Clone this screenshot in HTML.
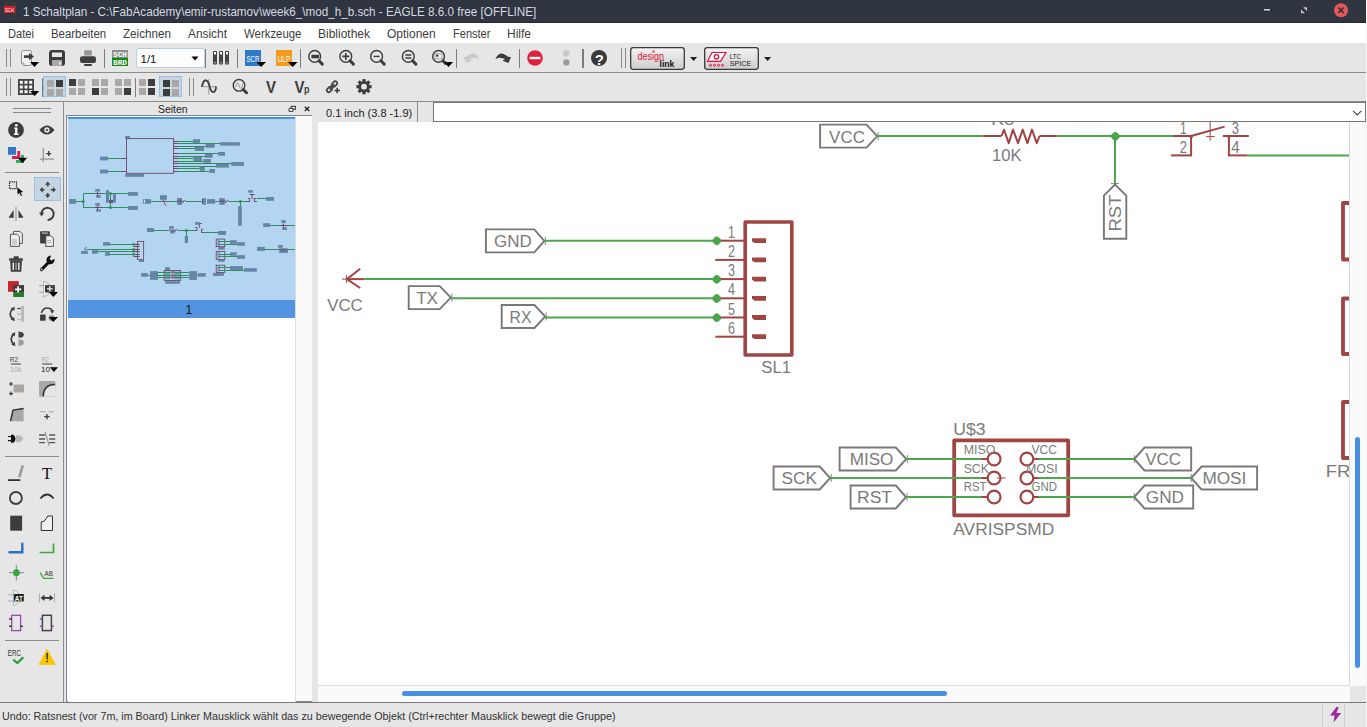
<!DOCTYPE html>
<html><head><meta charset="utf-8">
<style>
*{margin:0;padding:0;box-sizing:border-box}
html,body{width:1367px;height:727px;overflow:hidden;background:#e6e6e6;font-family:"Liberation Sans",sans-serif}
.a{position:absolute}
.hl{position:absolute;height:1px;background:#8c8c8c}
.vl{position:absolute;width:1px;background:#8c8c8c}
.tt{position:absolute;white-space:nowrap;transform-origin:0 0;line-height:1}
</style></head>
<body>
<div class="a" style="left:0;top:0;width:1367px;height:23px;background:#2e3440"></div>
<div class="tt" style="left:23px;top:5px;font-size:13px;color:#d6dae0;transform:scaleX(0.897)">1 Schaltplan - C:\FabAcademy\emir-rustamov\week6_\mod_h_b.sch - EAGLE 8.6.0 free [OFFLINE]</div>
<div class="a" style="left:0;top:23px;width:1367px;height:20px;background:#fff"></div>
<div class="tt" style="left:8px;top:28px;font-size:12px;color:#3c3c3c;transform:scaleX(0.93)">Datei</div>
<div class="tt" style="left:51px;top:28px;font-size:12px;color:#3c3c3c;transform:scaleX(0.95)">Bearbeiten</div>
<div class="tt" style="left:123px;top:28px;font-size:12px;color:#3c3c3c;transform:scaleX(0.97)">Zeichnen</div>
<div class="tt" style="left:188px;top:28px;font-size:12px;color:#3c3c3c;transform:scaleX(0.99)">Ansicht</div>
<div class="tt" style="left:244px;top:28px;font-size:12px;color:#3c3c3c;transform:scaleX(0.95)">Werkzeuge</div>
<div class="tt" style="left:318px;top:28px;font-size:12px;color:#3c3c3c;transform:scaleX(1)">Bibliothek</div>
<div class="tt" style="left:387px;top:28px;font-size:12px;color:#3c3c3c;transform:scaleX(1)">Optionen</div>
<div class="tt" style="left:453px;top:28px;font-size:12px;color:#3c3c3c;transform:scaleX(0.92)">Fenster</div>
<div class="tt" style="left:507px;top:28px;font-size:12px;color:#3c3c3c;transform:scaleX(1)">Hilfe</div>
<div class="hl" style="left:0;top:72px;width:1367px"></div>
<div class="hl" style="left:0;top:101px;width:1367px"></div>
<div class="vl" style="left:63px;top:102px;height:600px"></div>
<div class="tt" style="left:158px;top:104px;font-size:11px;color:#222;transform:scaleX(0.95)">Seiten</div>
<div class="a" style="left:66px;top:115px;width:246px;height:587px;background:#fafafa;border:1px solid #818896;border-right:none"></div>
<div class="a" style="left:68px;top:318px;width:227px;height:384px;background:#fff"></div>
<div class="a" style="left:68px;top:117px;width:227px;height:2px;background:#4a8fe0"></div>
<div class="a" style="left:68px;top:119px;width:227px;height:181px;background:#b3d5f2"></div>
<div class="a" style="left:68px;top:300px;width:227px;height:18px;background:#5294e2"></div>
<div class="tt" style="left:185.5px;top:304px;font-size:12px;color:#111">1</div>
<div class="a" style="left:295px;top:117px;width:1px;height:585px;background:#d9dee4"></div>
<div class="tt" style="left:326px;top:108px;font-size:11px;color:#222">0.1 inch (3.8 -1.9)</div>
<div class="vl" style="left:417px;top:102px;height:20px"></div>
<div class="a" style="left:433px;top:102px;width:933px;height:20px;background:#fff;border:1px solid #777"></div>
<div class="a" style="left:318px;top:122px;width:1032px;height:564px;background:#fff;border-right:1px solid #d7dce2;border-bottom:1px solid #d7dce2"></div>
<div class="a" style="left:1350px;top:122px;width:17px;height:564px;background:#fafafa"></div>
<div class="a" style="left:318px;top:686px;width:1032px;height:16px;background:#fafafa"></div>
<div class="a" style="left:402px;top:691px;width:545px;height:5px;background:#4a90e2;border-radius:3px"></div>
<div class="a" style="left:1355px;top:437px;width:5px;height:231px;background:#4a90e2;border-radius:3px"></div>
<div class="hl" style="left:0;top:702px;width:1367px;background:#7a7a7a"></div>
<div class="tt" style="left:2px;top:711px;font-size:11.3px;color:#333;transform:scaleX(0.95)">Undo: Ratsnest (vor 7m, im Board) Linker Mausklick wählt das zu bewegende Objekt (Ctrl+rechter Mausklick bewegt die Gruppe)</div>
<div class="vl" style="left:1322px;top:704px;height:23px;background:#cfcfcf"></div>
<div class="vl" style="left:1344px;top:704px;height:23px;background:#cfcfcf"></div>
<div class="a" style="left:0;top:22px;width:1366px;height:1px;background:#252a35"></div>
<div class="a" style="left:1366px;top:0;width:1px;height:727px;background:#f7f7f7"></div>
<svg class="a" style="left:0;top:0" width="1367" height="727" viewBox="0 0 1367 727"><g id="tb1">
<!-- grip -->
<rect x="6" y="49" width="1" height="18" fill="#8a8a8a"/><rect x="10" y="49" width="1" height="18" fill="#8a8a8a"/>
<!-- open -->
<path d="M21.5 52.5 Q21.5 50.5 23.5 50.5 L29.5 50.5 Q31.5 50.5 31.5 52.5 L31.5 63.5 Q31.5 65.5 29.5 65.5 L24 65.5 L21.5 63 Z" fill="#f2f2f2" stroke="#8d8d8d" stroke-width="1"/>
<path d="M21.5 63 L24 63 L24 65.5" fill="#ccc" stroke="#8d8d8d" stroke-width="0.8"/>
<rect x="24" y="55.3" width="5.5" height="2.6" fill="#3d3d3d"/>
<path d="M29 53 L34 56.6 L29 60.2 Z" fill="#3d3d3d"/>
<path d="M30 62 L39 62 L34.5 67 Z" fill="#000"/>
<!-- save -->
<rect x="49" y="50" width="16" height="16" rx="3" fill="#3d3d3d"/>
<rect x="52" y="52.5" width="10" height="4.5" fill="#e8e8e8"/>
<rect x="52" y="60" width="10" height="6" fill="#aca8a6"/>
<rect x="59" y="61.8" width="1.8" height="2.8" fill="#eee"/>
<!-- print -->
<rect x="84" y="50" width="8" height="5.7" rx="0.8" fill="#a9a5a2"/>
<rect x="85" y="51.6" width="6" height="0.9" fill="#858280"/><rect x="85" y="53.4" width="6" height="0.9" fill="#858280"/>
<rect x="80" y="56.3" width="16" height="6.7" rx="2.2" fill="#3d3d3d"/>
<rect x="84" y="64" width="8" height="2" rx="1" fill="#3d3d3d"/>
<rect x="104" y="49" width="1" height="19" fill="#7c7c7c"/>
<!-- sch brd -->
<rect x="112" y="50" width="16" height="7.5" fill="#8e8e8e"/>
<rect x="112" y="57.5" width="16" height="8.5" fill="#178517"/>
<text x="120" y="56.8" font-family="Liberation Mono" font-size="7.5" font-weight="bold" fill="#fff" text-anchor="middle" textLength="14" lengthAdjust="spacingAndGlyphs">SCH</text>
<text x="120" y="65" font-family="Liberation Mono" font-size="8" font-weight="bold" fill="#fff" text-anchor="middle" textLength="14" lengthAdjust="spacingAndGlyphs">BRD</text>
<!-- combo -->
<rect x="136.5" y="48.5" width="68" height="19" rx="2" fill="#fdfdfd" stroke="#b9cde3" stroke-width="1"/>
<text x="140.5" y="63" font-family="Liberation Sans" font-size="11.5" fill="#111">1/1</text>
<path d="M191.5 56.5 L198.5 56.5 L195 60.5 Z" fill="#000"/>
<rect x="205" y="49" width="1" height="19" fill="#7c7c7c"/>
<!-- library -->
<g fill="#434343"><rect x="213" y="51" width="4" height="13.5" rx="0.8"/><rect x="219" y="51" width="4" height="13.5" rx="0.8"/><rect x="225" y="51" width="4" height="13.5" rx="0.8"/></g>
<g fill="#fff"><rect x="214" y="52" width="2" height="2.5"/><rect x="220" y="52" width="2" height="2.5"/><rect x="226" y="52" width="2" height="2.5"/></g>
<g fill="#999"><rect x="214" y="62" width="2" height="1.5"/><rect x="220" y="62" width="2" height="1.5"/><rect x="226" y="62" width="2" height="1.5"/></g>
<rect x="237" y="49" width="1" height="19" fill="#7c7c7c"/>
<!-- SCR -->
<rect x="245" y="50" width="16" height="16" fill="#2f79c9"/>
<text x="253" y="62" font-family="Liberation Sans" font-size="8.5" fill="#fff" text-anchor="middle" textLength="13" lengthAdjust="spacingAndGlyphs">SCR</text>
<path d="M256.5 62 L266 62 L261.2 67 Z" fill="#000"/>
<!-- ULP -->
<rect x="276" y="50" width="16" height="16" fill="#f29b1d"/>
<text x="284" y="62" font-family="Liberation Sans" font-size="8.5" fill="#fff" text-anchor="middle" textLength="13" lengthAdjust="spacingAndGlyphs">ULP</text>
<path d="M288 62 L297.5 62 L292.7 67 Z" fill="#000"/>
<rect x="300" y="49" width="1" height="19" fill="#7c7c7c"/>
<!-- zoom icons -->
<g stroke="#3d3d3d" fill="none">
<circle cx="314.7" cy="56.4" r="5.9" stroke-width="1.4"/><path d="M319 60.8 L322.3 64.1" stroke-width="3" stroke-linecap="round"/>
<circle cx="345.8" cy="56.4" r="5.9" stroke-width="1.4"/><path d="M350.1 60.8 L353.4 64.1" stroke-width="3" stroke-linecap="round"/>
<circle cx="376.6" cy="56.4" r="5.9" stroke-width="1.4"/><path d="M380.9 60.8 L384.2 64.1" stroke-width="3" stroke-linecap="round"/>
<circle cx="408.3" cy="56.4" r="5.9" stroke-width="1.4"/><path d="M412.6 60.8 L415.9 64.1" stroke-width="3" stroke-linecap="round"/>
<circle cx="438.6" cy="56.4" r="5.9" stroke-width="1.4"/><path d="M442.9 60.8 L445.5 63.4" stroke-width="3" stroke-linecap="round"/>
</g>
<rect x="311.4" y="54.8" width="7.7" height="3.5" fill="#3d3d3d"/>
<path d="M342.3 56.4 H349.3 M345.8 52.9 V59.9" stroke="#3d3d3d" stroke-width="1.6"/>
<path d="M373.6 56.4 H379.6" stroke="#3d3d3d" stroke-width="1.4"/>
<path d="M405.3 55 H411.3 M405.3 58 H411.3" stroke="#3d3d3d" stroke-width="1.3"/>
<rect x="435" y="53.8" width="7" height="5" fill="#eee" stroke="#999" stroke-width="0.8"/>
<rect x="436" y="54.6" width="2.4" height="2" fill="#3d3d3d"/>
<path d="M444 62 L453 62 L448.5 67 Z" fill="#000"/>
<rect x="456" y="49" width="1" height="19" fill="#7c7c7c"/>
<!-- undo / redo -->
<path d="M479.2 59.2 Q475.5 50.6 468.5 55.2 L467.0 56.6 L463.5 57.3 L466.1 62.9 L472.0 60.8 L469.5 59.3 Q474.0 56.2 479.2 59.2 Z" fill="#c9c9c9"/>
<path d="M495.3 59.2 Q499 50.6 506 55.2 L507.5 56.6 L511 57.3 L508.4 62.9 L502.5 60.8 L505 59.3 Q500.5 56.2 495.3 59.2 Z" fill="#3d3d3d"/>
<rect x="519" y="49" width="1" height="19" fill="#7c7c7c"/>
<!-- stop -->
<circle cx="535" cy="58" r="7.8" fill="#e0213c"/>
<rect x="529.6" y="56.8" width="10.8" height="2.4" fill="#fff"/>
<circle cx="566.3" cy="53.3" r="3.2" fill="#c9c9c9"/>
<circle cx="566.3" cy="62.4" r="3.2" fill="#9b9b9b"/>
<rect x="582" y="49" width="2" height="19" fill="#7c7c7c"/>
<!-- help -->
<circle cx="599" cy="58" r="8" fill="#3a3a3a"/>
<text x="599.3" y="64.6" font-family="Liberation Sans" font-weight="bold" font-size="15" fill="#fff" text-anchor="middle">?</text>
<rect x="621" y="48" width="1" height="20" fill="#8a8a8a"/><rect x="625" y="48" width="1" height="20" fill="#8a8a8a"/>
<!-- designlink -->
<defs><linearGradient id="btng" x1="0" y1="0" x2="0" y2="1"><stop offset="0" stop-color="#f3f3f3"/><stop offset="1" stop-color="#cdcdcd"/></linearGradient></defs>
<rect x="630.7" y="47.7" width="53.6" height="21.6" rx="2.5" fill="url(#btng)" stroke="#3a3a3a" stroke-width="1.3"/>
<text x="637.5" y="59.6" font-family="Liberation Sans" font-size="10.5" fill="#e0103a" textLength="26.4" lengthAdjust="spacingAndGlyphs">design</text><circle cx="653.6" cy="51.4" r="0.9" fill="none" stroke="#e0103a" stroke-width="0.7"/>
<text x="659.6" y="66.7" font-family="Liberation Sans" font-weight="bold" font-size="9.5" fill="#111" textLength="14.6" lengthAdjust="spacingAndGlyphs">link</text>
<path d="M690 57 L697.2 57 L693.6 61 Z" fill="#222"/>
<!-- ltspice -->
<rect x="704.7" y="47.7" width="53.6" height="21.6" rx="2.5" fill="url(#btng)" stroke="#3a3a3a" stroke-width="1.3"/>
<path d="M712 52.5 L726 52.5 L720.5 61.3 L707.5 61.3 Z" fill="#fff" stroke="#e0103a" stroke-width="1.2"/>
<circle cx="716.5" cy="56.8" r="2.2" fill="none" stroke="#e0103a" stroke-width="1.3"/>
<g fill="none" stroke="#e0103a" stroke-width="1"><circle cx="710.5" cy="65.3" r="1"/><circle cx="714.5" cy="65.3" r="1"/><circle cx="718.5" cy="65.3" r="1"/><circle cx="722.5" cy="65.3" r="1"/></g>
<text x="729.8" y="59" font-family="Liberation Sans" font-size="7" fill="#222" textLength="11" lengthAdjust="spacingAndGlyphs">LTC</text>
<text x="729.8" y="66" font-family="Liberation Sans" font-size="7" fill="#222" textLength="21.5" lengthAdjust="spacingAndGlyphs">SPICE</text>
<path d="M764 57 L771.2 57 L767.6 61 Z" fill="#222"/>
</g>
<g id="tb2">
<rect x="6" y="78" width="1" height="18" fill="#8a8a8a"/><rect x="10" y="78" width="1" height="18" fill="#8a8a8a"/>
<!-- grid -->
<rect x="18" y="79" width="16" height="16" fill="#444"/>
<g fill="#fff"><rect x="19.8" y="80.8" width="3" height="3"/><rect x="24.5" y="80.8" width="3" height="3"/><rect x="29.2" y="80.8" width="3" height="3"/>
<rect x="19.8" y="85.5" width="3" height="3"/><rect x="24.5" y="85.5" width="3" height="3"/><rect x="29.2" y="85.5" width="3" height="3"/>
<rect x="19.8" y="90.2" width="3" height="3"/><rect x="24.5" y="90.2" width="3" height="3"/><rect x="29.2" y="90.2" width="3" height="3"/></g>
<path d="M30 91 L39.2 91 L34.6 96 Z" fill="#000"/>
<rect x="42" y="78" width="1" height="19" fill="#7c7c7c"/>
<!-- layout buttons -->
<rect x="43.5" y="76.5" width="22" height="20" fill="#c6d5e4" stroke="#96bde2" stroke-width="1"/>
<g fill="#aba7a5">
<rect x="47" y="80" width="7" height="7"/><rect x="47" y="89" width="7" height="7"/><rect x="56" y="89" width="7" height="7"/>
<rect x="78" y="79" width="7" height="7"/><rect x="69" y="88" width="7" height="7"/><rect x="78" y="88" width="7" height="7"/>
<rect x="92" y="79" width="7" height="7"/><rect x="101" y="79" width="7" height="7"/><rect x="101" y="88" width="7" height="7"/>
<rect x="115" y="79" width="7" height="7"/><rect x="124" y="79" width="7" height="7"/><rect x="115" y="88" width="7" height="7"/>
<rect x="139" y="79" width="7" height="7"/><rect x="139" y="88" width="7" height="7"/>
</g>
<g fill="#3c3c3c">
<rect x="56" y="80" width="7" height="7"/>
<rect x="69" y="79" width="7" height="7"/>
<rect x="92" y="88" width="7" height="7"/>
<rect x="124" y="88" width="7" height="7"/>
<rect x="148" y="79" width="7" height="7"/><rect x="148" y="88" width="7" height="7"/>
</g>
<rect x="135" y="78" width="1" height="19" fill="#7c7c7c"/>
<rect x="159.5" y="76.5" width="22" height="20" fill="#c6d5e4" stroke="#96bde2" stroke-width="1"/>
<rect x="163" y="80" width="7" height="7" fill="#3c3c3c"/><rect x="163" y="89" width="7" height="7" fill="#3c3c3c"/>
<rect x="172" y="80" width="7" height="7" fill="#aba7a5"/><rect x="172" y="89" width="7" height="7" fill="#aba7a5"/>
<rect x="189" y="78" width="1" height="18" fill="#8a8a8a"/><rect x="193" y="78" width="1" height="18" fill="#8a8a8a"/>
<!-- sine -->
<path d="M208.7 79 V94.6 M203 86.7 H216" stroke="#a9a9a9" stroke-width="1.2"/>
<path d="M201.8 87 Q203.5 79 206.5 80.5 Q208.5 81.5 209.5 86 Q211 92.5 213.5 92 Q216 91.5 216 86.5" stroke="#3d3d3d" stroke-width="1.8" fill="none"/>
<!-- scope -->
<circle cx="239" cy="85.3" r="5.8" stroke="#3d3d3d" stroke-width="1.4" fill="none"/>
<path d="M243.2 89.5 L246.5 92.8" stroke="#3d3d3d" stroke-width="3" stroke-linecap="round"/>
<path d="M235.5 87 Q236.5 82 237.8 83 Q238.8 84 239.5 87 Q240.5 89.5 241.8 87.5 Q242.5 86 242.5 84" stroke="#999" stroke-width="1" fill="none"/>
<!-- V -->
<text x="271.1" y="93.3" font-family="Liberation Sans" font-weight="bold" font-size="17" fill="#3d3d3d" text-anchor="middle" textLength="10" lengthAdjust="spacingAndGlyphs">V</text>
<text x="299.6" y="93.3" font-family="Liberation Sans" font-weight="bold" font-size="17" fill="#3d3d3d" text-anchor="middle" textLength="10" lengthAdjust="spacingAndGlyphs">V</text>
<text x="304" y="93" font-family="Liberation Sans" font-weight="bold" font-size="10" fill="#3d3d3d" textLength="5.5" lengthAdjust="spacingAndGlyphs">p</text>
<!-- link -->
<g stroke="#3d3d3d" stroke-width="1.6" fill="none">
<rect x="326.5" y="87.5" width="6" height="4" rx="2" transform="rotate(-45 329.5 89.5)"/>
<rect x="331.5" y="82" width="6" height="4" rx="2" transform="rotate(-45 334.5 84)"/>
<path d="M329.5 89.5 L334.5 84"/>
<path d="M334.5 90.5 H340 M337.2 87.8 V93.2"/>
</g>
<!-- gear -->
<g transform="translate(364 86.7)" fill="#3d3d3d">
<circle r="5.6"/>
<g id="teeth"><rect x="-1.6" y="-7.6" width="3.2" height="3"/><rect x="-1.6" y="4.6" width="3.2" height="3"/><rect x="-7.6" y="-1.6" width="3" height="3.2"/><rect x="4.6" y="-1.6" width="3" height="3.2"/></g>
<g transform="rotate(45)"><rect x="-1.6" y="-7.6" width="3.2" height="3"/><rect x="-1.6" y="4.6" width="3.2" height="3"/><rect x="-7.6" y="-1.6" width="3" height="3.2"/><rect x="4.6" y="-1.6" width="3" height="3.2"/></g>
<circle r="2.9" fill="#e6e6e6"/>
</g>
</g>
<g id="misc">
<!-- title icon -->
<rect x="5" y="3.2" width="10.5" height="15.3" rx="1.2" fill="none" stroke="#4a4436" stroke-width="0.8"/>
<rect x="3.8" y="5.8" width="11.3" height="7.3" fill="#d0202a"/>
<text x="9.45" y="11.8" font-family="Liberation Sans" font-size="6" fill="#fff" text-anchor="middle" textLength="9" lengthAdjust="spacingAndGlyphs">SCH</text>
<!-- window controls -->
<rect x="1264" y="9" width="6" height="1.6" fill="#c8ccd2"/>
<path d="M1301 13.2 V9.5 L1304.8 13.2 Z M1307 7.3 V11 L1303.2 7.3 Z" fill="#c8ccd2"/>
<circle cx="1341" cy="10.2" r="7" fill="#e05a5a"/>
<path d="M1338.3 7.5 L1343.7 12.9 M1343.7 7.5 L1338.3 12.9" stroke="#3a2a2e" stroke-width="1.5"/>
<!-- Seiten panel icons -->
<rect x="291.2" y="106.3" width="4.2" height="3" fill="none" stroke="#333" stroke-width="1"/>
<path d="M289 108.3 H293 V111.3 H289 Z" fill="#fff" stroke="#333" stroke-width="1"/>
<path d="M304.8 106.8 L309.3 110.9 M309.3 106.8 L304.8 110.9" stroke="#222" stroke-width="1.3"/>
<!-- coord combo chevron -->
<path d="M1353 110.8 L1357.2 115 L1361.4 110.8" stroke="#444" stroke-width="1.1" fill="none"/>
<!-- lightning -->
<path d="M1336.5 707 L1330 715.5 L1334.6 715.5 L1333.5 722.5 L1341.2 713 L1336.3 713 L1338.8 707 Z" fill="#9c2a9c"/>
</g>
<g id="lefttb">
<rect x="13" y="108" width="38" height="1" fill="#8a8a8a"/><rect x="13" y="112" width="38" height="1" fill="#8a8a8a"/>
<!-- info -->
<circle cx="16" cy="130" r="7.9" fill="#3d3d3d"/>
<circle cx="16.3" cy="125.3" r="1.3" fill="#fff"/>
<path d="M14.3 127.6 H17.4 V133.5 H18.6 V135 H13.9 V133.5 H15.1 V129 H14.3 Z" fill="#fff"/>
<!-- eye -->
<path d="M39.4 130 Q47 121 54.5 130 Q47 139 39.4 130 Z" fill="#3d3d3d"/>
<circle cx="46.9" cy="130" r="2.7" fill="#e6e6e6"/><circle cx="46.9" cy="130" r="1.1" fill="#3d3d3d"/>
<!-- color layers -->
<rect x="8" y="147" width="8" height="7.7" fill="#2f78c8"/>
<path d="M17.2 151 H20.2 V159 H12 V156 H17.2 Z" fill="#e0205a"/>
<path d="M21 155 H24 V163 H16 V160 H21 Z" fill="#2fae5a"/>
<path d="M17.8 157.8 L27.2 157.8 L22.5 163 Z" fill="#000"/>
<!-- coord + -->
<rect x="42.6" y="148" width="1.4" height="14" fill="#9a9a9a"/><rect x="40" y="158.4" width="14" height="1.4" fill="#9a9a9a"/>
<path d="M46.2 153.6 H51.2 M48.7 151.1 V156.1" stroke="#3d3d3d" stroke-width="1.4"/>
<rect x="5" y="172" width="54" height="1" fill="#8c8c8c"/>
<!-- select -->
<rect x="9.5" y="181.8" width="7" height="6.8" fill="none" stroke="#111" stroke-width="1.2" stroke-dasharray="1.2 0.9"/>
<path d="M17.2 187.2 L23.2 192 L20.6 192.4 L22.2 195.4 L21 196 L19.5 193 L17.6 194.6 Z" fill="#111"/>
<!-- move (selected) -->
<rect x="34.5" y="177.5" width="26" height="23" fill="#c6d5e4" stroke="#9cc0e2" stroke-width="1"/>
<g fill="#3d3d3d">
<path d="M47.7 181.6 L50.4 184.8 L45 184.8 Z"/><path d="M47.7 198 L50.4 194.8 L45 194.8 Z"/>
<path d="M39.6 189.8 L42.8 187.1 L42.8 192.5 Z"/><path d="M56 189.8 L52.8 187.1 L52.8 192.5 Z"/>
</g>
<path d="M47.7 184.5 V186.6 M47.7 193 V195.1 M42.5 189.8 H44.6 M50.8 189.8 H52.9" stroke="#3d3d3d" stroke-width="1.6"/>
<!-- mirror -->
<rect x="15.3" y="207" width="1.4" height="14" fill="#a8a8a8"/>
<path d="M8.5 217.7 L13.6 210 L13.6 217.7 Z" fill="#3d3d3d"/><path d="M23.6 217.7 L18.5 210 L18.5 217.7 Z" fill="#3d3d3d"/>
<!-- rotate -->
<path d="M41.5 213 A6.1 6.1 0 1 1 47.6 220" stroke="#3d3d3d" stroke-width="1.9" fill="none"/>
<path d="M39 212.5 L44.2 212.5 L41.6 216.5 Z" fill="#3d3d3d"/>
<!-- copy -->
<path d="M13.4 232 Q13.4 231.4 14 231.4 L20 231.4 L22.4 233.8 L22.4 243.4 L13.4 243.4 Z" fill="#efefef" stroke="#444" stroke-width="0.9"/>
<path d="M10.4 234.8 Q10.4 234.2 11 234.2 L17 234.2 L19.4 236.6 L19.4 246.4 L10.4 246.4 Z" fill="#efefef" stroke="#444" stroke-width="0.9"/>
<path d="M12 240 H17 M12 242 H17 M12 244 H17" stroke="#999" stroke-width="0.8"/>
<!-- paste -->
<rect x="40.1" y="231.2" width="9.7" height="12.4" rx="0.8" fill="#3d3d3d"/>
<rect x="42" y="232.6" width="5.8" height="1" fill="#ddd"/>
<path d="M45.8 235.8 L51 235.8 L53.4 238.2 L53.4 246.4 L45.8 246.4 Z" fill="#efefef" stroke="#444" stroke-width="0.9"/>
<path d="M47.3 240.5 H51 M47.3 242.5 H51" stroke="#999" stroke-width="0.8"/>
<!-- trash -->
<rect x="13.6" y="256.3" width="5.2" height="2.4" rx="0.6" fill="#3d3d3d"/>
<rect x="9.2" y="258.3" width="13.7" height="2.5" fill="#3d3d3d"/>
<path d="M10.2 261.1 H21.9 L21.3 271.8 H10.8 Z" fill="#3d3d3d"/>
<rect x="12.6" y="262.5" width="1.3" height="7.5" fill="#fff"/><rect x="15.4" y="262.5" width="1.3" height="7.5" fill="#aaa"/><rect x="18.2" y="262.5" width="1.3" height="7.5" fill="#fff"/>
<!-- wrench -->
<path d="M41.5 269.6 L49 262" stroke="#111" stroke-width="3" stroke-linecap="round"/>
<circle cx="41.7" cy="269.4" r="0.8" fill="#e6e6e6"/>
<path d="M46.6 261.5 A4.6 4.6 0 0 1 51.2 255.6 L49.6 258.9 L51.4 260.6 L54.6 258.8 A4.6 4.6 0 0 1 48.4 264 Z" fill="#111"/>
<!-- add -->
<rect x="8" y="281.1" width="10.8" height="10.7" fill="#c4262e"/>
<rect x="13.2" y="285.1" width="10.8" height="7.7" fill="#3d3d3d"/>
<rect x="13.2" y="292.8" width="10.8" height="4.2" fill="#1e7e24"/>
<path d="M15 289.4 H21.2 M18.1 286.3 V292.5" stroke="#fff" stroke-width="1.6"/>
<!-- replace -->
<path d="M43.9 281 V297 M39.1 285.6 H44 M39.1 292.3 H44" stroke="#aaa" stroke-width="1.1" fill="none"/>
<path d="M44 281.3 Q50 283 51 289 Q50 295 44 296.7" stroke="#aaa" stroke-width="0.9" fill="#ececec"/>
<rect x="45" y="285.1" width="9.9" height="7.4" fill="#3d3d3d"/>
<path d="M47 288.8 H52.5 M49.75 286 V291.6" stroke="#ddd" stroke-width="1.5"/>
<path d="M48.7 292.1 L58 292.1 L53.3 297 Z" fill="#000"/>
<!-- swap gate -->
<path d="M12.6 309 Q7.8 314 12.6 319.2" stroke="#3d3d3d" stroke-width="1.7" fill="none"/>
<path d="M14.8 306.8 L14.2 311 L10.6 308.6 Z M14.8 321.2 L14.2 317 L10.6 319.4 Z" fill="#3d3d3d"/>
<path d="M17.2 308.5 H20.8" stroke="#444" stroke-width="1.2"/><path d="M17.2 314 H20.8" stroke="#aaa" stroke-width="1.2"/><path d="M17.2 319.5 H20.8" stroke="#bbb" stroke-width="1.2"/>
<rect x="21.3" y="306" width="2.5" height="15.6" fill="#b5b1af"/>
<!-- invoke -->
<rect x="40.1" y="314.5" width="5.5" height="6.2" fill="#3d3d3d"/>
<path d="M41.3 313 Q44 305.5 51 309 Q52 310 52.2 311.5" stroke="#3d3d3d" stroke-width="1.5" fill="none"/>
<path d="M50 310.5 L54.3 310.2 L52.3 313.8 Z" fill="#3d3d3d"/>
<circle cx="51.5" cy="318" r="3" fill="#999"/>
<path d="M48.7 317 L58 317 L53.3 322 Z" fill="#000"/>
<!-- pinswap -->
<path d="M13.3 334.4 Q9 339.2 13.3 344" stroke="#3d3d3d" stroke-width="1.7" fill="none"/>
<path d="M15.3 332.2 L14.8 336.4 L11.2 334 Z M15.3 346.2 L14.8 342 L11.2 344.4 Z" fill="#3d3d3d"/>
<path d="M19.3 331.7 A4.5 2.95 0 0 1 19.3 337.6 Z" fill="#3d3d3d"/>
<path d="M18.2 331.7 H20 V337.6 H18.2 Z" fill="#3d3d3d"/>
<path d="M19.3 339.4 A4.5 3.2 0 0 1 19.3 345.8 Z" fill="#9b9b9b"/>
<path d="M18.2 339.4 H20 V345.8 H18.2 Z" fill="#9b9b9b"/>
<path d="M17.5 333.3 H19.3 M17.5 336 H19.3 M17.5 341.2 H19.3 M17.5 344 H19.3" stroke="#e6e6e6" stroke-width="0.9"/>
<!-- R2 10k -->
<text x="9.8" y="361.5" font-family="Liberation Sans" font-size="7" fill="#3d3d3d" textLength="8.3" lengthAdjust="spacingAndGlyphs">R2</text>
<rect x="10.9" y="363.1" width="10" height="1.8" fill="#888"/>
<text x="9.8" y="371.8" font-family="Liberation Sans" font-size="7" fill="#aaa" textLength="12" lengthAdjust="spacingAndGlyphs">10k</text>
<text x="41.2" y="361.5" font-family="Liberation Sans" font-size="7" fill="#aaa" textLength="7.8" lengthAdjust="spacingAndGlyphs">R2</text>
<rect x="42.2" y="363.1" width="10" height="1.8" fill="#888"/>
<text x="41" y="371.8" font-family="Liberation Sans" font-size="7" fill="#222" textLength="9" lengthAdjust="spacingAndGlyphs">10</text>
<path d="M49.8 367.3 L58 367.3 L53.9 372 Z" fill="#000"/>
<!-- row 11 -->
<path d="M9 384 H13 M11 382 V386 M9 393.6 H13 M11 391.6 V395.6" stroke="#3d3d3d" stroke-width="1.2"/>
<rect x="13.5" y="384.5" width="10.5" height="8.1" rx="1" fill="#aaa6a4"/>
<rect x="39.1" y="381" width="16.1" height="15.6" fill="#aaa6a4"/>
<path d="M55.2 384.5 A12 12 0 0 0 43.2 396.6 L55.2 396.6 Z" fill="#e6e6e6"/>
<path d="M55.2 384.5 Q43.5 384.5 43.2 396.6" stroke="#333" stroke-width="1.6" fill="none"/>
<!-- row 12 -->
<path d="M10.5 421.2 L13 410.1 L23.6 408.6 L23.6 421.2 Z" fill="#aaa6a4"/>
<path d="M10.5 421.2 L13 410.1 L23.6 408.6" stroke="#333" stroke-width="1.5" fill="none"/>
<path d="M40.1 411.6 H45.6 M48.7 411.6 H53.9" stroke="#b0b0b0" stroke-width="1.2"/>
<path d="M44.2 416.6 H49.6 M46.9 413.9 V419.3" stroke="#3d3d3d" stroke-width="1.4"/>
<!-- row 13 -->
<path d="M11 434.7 L13.5 434.7 Q15.5 436.5 15.5 438.7 Q15.5 441 13.5 442.7 L11 442.7 Z" fill="#111"/>
<path d="M8 436.5 H11 M8 440.7 H11" stroke="#111" stroke-width="1.2"/>
<path d="M16 435.2 L20 435.2 L23.6 438.7 L20 442.2 L16 442.2 Z" fill="#b8b8b8"/>
<path d="M39.1 435 H45.1 M39.1 439 H45.1 M39.1 442.7 H45.1 M49.2 435 H55.2 M49.2 439 H55.2 M49.2 442.7 H55.2" stroke="#555" stroke-width="1.3"/>
<path d="M45.1 432.2 L49.2 445.7" stroke="#999" stroke-width="1.2"/>
<rect x="5" y="456" width="54" height="1" fill="#8c8c8c"/>
<!-- wire -->
<path d="M8.1 480.1 H20.3" stroke="#111" stroke-width="1.5"/>
<path d="M19.6 476.2 L22.5 466.5" stroke="#9a9a9a" stroke-width="2.6" stroke-linecap="round"/>
<!-- T -->
<text x="47" y="479" font-family="Liberation Serif" font-size="16.5" fill="#111" text-anchor="middle">T</text>
<!-- circle / arc -->
<circle cx="15.9" cy="498" r="6" fill="none" stroke="#3d3d3d" stroke-width="1.8"/>
<path d="M40.4 498.5 Q47 490.5 53.7 498.5" stroke="#333" stroke-width="1.8" fill="none"/>
<!-- rect / poly -->
<rect x="10.2" y="515.7" width="11.9" height="15" fill="#3c3c3c"/>
<path d="M41.2 530.5 V521.9 L44.3 521.2 L47.9 516 H52.5 V530.5 Z" fill="#efefef" stroke="#333" stroke-width="1"/>
<!-- net / bus -->
<path d="M9.5 552.3 H22.3 V543.8" stroke="#2a6fc4" stroke-width="2.4" fill="none" stroke-linecap="round"/>
<path d="M39.6 552.5 H53.5 V543.4" stroke="#3aaa3a" stroke-width="1.7" fill="none"/>
<!-- junction -->
<path d="M9 572.7 H23.8 M16.4 564.7 V580.6" stroke="#999" stroke-width="1.3"/>
<circle cx="16.4" cy="572.7" r="3.4" fill="#34a83a"/>
<!-- label -->
<path d="M40.1 572.7 L43.6 578.4 H53.5" stroke="#3aaa3a" stroke-width="1.4" fill="none"/>
<text x="44.6" y="575.8" font-family="Liberation Sans" font-size="7.5" fill="#333" textLength="8.4" lengthAdjust="spacingAndGlyphs">AB</text>
<!-- attribute -->
<path d="M8 594.8 H13.9 M8 601 H13.9" stroke="#aaa" stroke-width="1"/>
<path d="M13.4 590 Q19 591 20 597.8 Q19 604.5 13.4 605.5 Z" fill="#ececec" stroke="#aaa" stroke-width="0.8"/>
<rect x="13.9" y="594" width="9.9" height="7.4" fill="#222"/>
<text x="18.8" y="600.8" font-family="Liberation Sans" font-weight="bold" font-size="7" fill="#fff" text-anchor="middle" textLength="8" lengthAdjust="spacingAndGlyphs">AT</text>
<!-- dimension -->
<path d="M39.4 593.4 V602.4 M54.5 593.4 V602.4" stroke="#aaa" stroke-width="1"/>
<path d="M43 597.9 H51.2" stroke="#333" stroke-width="1.8"/>
<path d="M40.6 597.9 L44.5 594.8 L44.5 601 Z M53.5 597.9 L49.6 594.8 L49.6 601 Z" fill="#333"/>
<!-- frames -->
<rect x="11.7" y="615.3" width="8.9" height="15.3" fill="none" stroke="#9a48aa" stroke-width="1.3"/>
<path d="M9.1 619.1 H11.7 M9.1 626.3 H11.7 M20.6 626.3 H22.8" stroke="#333" stroke-width="1.5"/>
<rect x="42.4" y="615.3" width="9" height="15.3" fill="none" stroke="#444" stroke-width="1.5"/>
<path d="M39.8 619.1 H42.4 M39.8 626.3 H42.4 M51.4 626.3 H53.9" stroke="#9a48aa" stroke-width="1.5"/>
<rect x="5" y="640" width="54" height="1" fill="#8c8c8c"/>
<!-- ERC -->
<text x="7.8" y="656" font-family="Liberation Sans" font-size="8.5" fill="#333" textLength="13.2" lengthAdjust="spacingAndGlyphs">ERC</text>
<path d="M13.2 659.6 L17.4 663 L23.3 657.2" stroke="#2e9a3a" stroke-width="2.2" fill="none"/>
<!-- warning -->
<path d="M47.1 649.4 L55.2 664.4 L39 664.4 Z" fill="#f6c700" stroke="#f6c700" stroke-width="0.8" stroke-linejoin="round"/>
<rect x="46.4" y="652.8" width="1.5" height="6.5" fill="#333"/><rect x="46.4" y="660.6" width="1.5" height="1.6" fill="#333"/>
</g>
<g>
<rect x="125.1" y="136" width="4.8" height="2.6" fill="#6485a5"/>
<rect x="125.1" y="174" width="18.9" height="2.8" fill="#6485a5"/>
<rect x="100" y="156.6" width="8" height="3.8" fill="#6485a5"/>
<rect x="100" y="169.6" width="8" height="3.8" fill="#6485a5"/>
<path d="M108 158.5 H120.6" stroke="#2e8f5e" stroke-width="1"/>
<path d="M108 171.5 H120.6" stroke="#2e8f5e" stroke-width="1"/>
<path d="M120.6 158.5 H126.5" stroke="#6f4868" stroke-width="1"/>
<path d="M120.6 171.5 H126.5" stroke="#6f4868" stroke-width="1"/>
<rect x="126.5" y="138.6" width="47.1" height="34.7" fill="none" stroke="#6f4868" stroke-width="0.9"/>
<path d="M173.6 141.5 H178" stroke="#6f4868" stroke-width="1"/>
<path d="M178 141.5 H193" stroke="#2e8f5e" stroke-width="1"/>
<rect x="193" y="139.2" width="7" height="3.7" fill="#6485a5"/>
<path d="M173.6 143.5 H178" stroke="#6f4868" stroke-width="1"/>
<path d="M178 143.5 H220.2" stroke="#2e8f5e" stroke-width="1"/>
<rect x="220.2" y="142.2" width="19.7" height="3.4" fill="#6485a5"/>
<path d="M173.6 146.5 H178" stroke="#6f4868" stroke-width="1"/>
<path d="M178 146.5 H205.5" stroke="#2e8f5e" stroke-width="1"/>
<rect x="205.5" y="144" width="9.2" height="3.7" fill="#6485a5"/>
<path d="M173.6 148.5 H178" stroke="#6f4868" stroke-width="1"/>
<path d="M178 148.5 H194.8" stroke="#2e8f5e" stroke-width="1"/>
<rect x="194.8" y="147" width="9.2" height="3.9" fill="#6485a5"/>
<path d="M173.6 153.5 H178" stroke="#6f4868" stroke-width="1"/>
<path d="M178 153.5 H218" stroke="#2e8f5e" stroke-width="1"/>
<rect x="218" y="152" width="7" height="3.7" fill="#6485a5"/>
<path d="M173.6 156.5 H178" stroke="#6f4868" stroke-width="1"/>
<path d="M178 156.5 H205" stroke="#2e8f5e" stroke-width="1"/>
<rect x="205" y="154" width="7.6" height="3.7" fill="#6485a5"/>
<path d="M173.6 158.5 H178" stroke="#6f4868" stroke-width="1"/>
<path d="M178 158.5 H193.4" stroke="#2e8f5e" stroke-width="1"/>
<rect x="193.4" y="157" width="8.5" height="4" fill="#6485a5"/>
<path d="M173.6 161.5 H178" stroke="#6f4868" stroke-width="1"/>
<path d="M178 161.5 H203.3" stroke="#2e8f5e" stroke-width="1"/>
<rect x="203.3" y="159" width="7.6" height="3.8" fill="#6485a5"/>
<path d="M173.6 163.5 H178" stroke="#6f4868" stroke-width="1"/>
<path d="M178 163.5 H231.2" stroke="#2e8f5e" stroke-width="1"/>
<rect x="231.2" y="162" width="12.7" height="3.9" fill="#6485a5"/>
<path d="M173.6 166.5 H178" stroke="#6f4868" stroke-width="1"/>
<path d="M178 166.5 H216" stroke="#2e8f5e" stroke-width="1"/>
<rect x="216" y="164" width="12.9" height="3.6" fill="#6485a5"/>
<path d="M173.6 168.5 H178" stroke="#6f4868" stroke-width="1"/>
<path d="M178 168.5 H199.6" stroke="#2e8f5e" stroke-width="1"/>
<rect x="199.6" y="167" width="5.2" height="3.8" fill="#6485a5"/>
<path d="M173.6 171.5 H178" stroke="#6f4868" stroke-width="1"/>
<path d="M178 171.5 H209.5" stroke="#2e8f5e" stroke-width="1"/>
<rect x="209.5" y="169" width="5.5" height="3.9" fill="#6485a5"/>
<rect x="69.2" y="199" width="6.7" height="4.8" fill="#6485a5"/>
<path d="M75.9 201.5 H83.2" stroke="#2e8f5e" stroke-width="1"/>
<circle cx="83.2" cy="201.4" r="1.5" fill="#2e8f5e"/>
<path d="M83.5 193.5 V207.5" stroke="#2e8f5e" stroke-width="1"/>
<path d="M83.2 193.5 H127.7" stroke="#2e8f5e" stroke-width="1"/>
<path d="M83.2 207.5 H127.7" stroke="#2e8f5e" stroke-width="1"/>
<rect x="95.2" y="189.1" width="4.7" height="2.6" fill="#6485a5"/>
<rect x="96.1" y="195.2" width="4.7" height="2.6" fill="#6485a5"/>
<path d="M94.9 193.5 H101.9" stroke="#6f4868" stroke-width="1"/>
<path d="M97.5 192.0 V195.8" stroke="#6f4868" stroke-width="1"/>
<rect x="95.2" y="203.1" width="4.7" height="2.7" fill="#6485a5"/>
<rect x="96.1" y="209.3" width="4.7" height="2.5" fill="#6485a5"/>
<path d="M94.9 207.5 H101.9" stroke="#6f4868" stroke-width="1"/>
<path d="M97.5 206.0 V209.8" stroke="#6f4868" stroke-width="1"/>
<rect x="106" y="190.1" width="3" height="12.5" fill="#6485a5"/>
<rect x="113" y="193.8" width="2.9" height="8.8" fill="#6485a5"/>
<path d="M110.5 193.5 V207.5" stroke="#2e8f5e" stroke-width="1"/>
<rect x="109" y="199.9" width="4" height="3.2" fill="#6485a5"/>
<rect x="109" y="199.9" width="4" height="3.2" fill="#6f4868" opacity="0.8"/>
<circle cx="110.4" cy="193.5" r="1.5" fill="#2e8f5e"/>
<circle cx="110.4" cy="207.5" r="1.5" fill="#2e8f5e"/>
<rect x="128" y="192" width="9.9" height="3.8" fill="#6485a5"/>
<rect x="128" y="206" width="9.9" height="3.9" fill="#6485a5"/>
<rect x="143.1" y="199.1" width="7.9" height="4.6" fill="#6485a5"/>
<rect x="144" y="199.8" width="1" height="3.2" fill="#d8e8f6"/>
<path d="M151 201.5 H160" stroke="#2e8f5e" stroke-width="1"/>
<rect x="160" y="195.2" width="6.8" height="4.6" fill="#6485a5"/>
<path d="M160 201.4 H167 M163 199.5 L165 204.5 L166.5 205.5" stroke="#6f4868" stroke-width="0.9" fill="none"/>
<path d="M167 201.5 H177" stroke="#2e8f5e" stroke-width="1"/>
<rect x="177.1" y="198" width="4.9" height="6.8" fill="#6485a5"/>
<polyline points="177.00,201.40 178.45,200.10 179.90,202.70 181.35,200.10 182.80,202.70 184.25,200.10 185.70,201.40" fill="none" stroke="#6f4868" stroke-width="0.9"/>
<path d="M185.7 201.5 H201.9" stroke="#2e8f5e" stroke-width="1"/>
<path d="M202.5 198.8 V204" stroke="#6f4868" stroke-width="1"/>
<rect x="203.1" y="198" width="2.8" height="6.8" fill="#6485a5"/>
<rect x="207" y="199.1" width="8" height="4.6" fill="#6485a5"/>
<path d="M215 201.5 H219.8" stroke="#2e8f5e" stroke-width="1"/>
<rect x="219.3" y="198.2" width="5.5" height="6.6" fill="#6485a5"/>
<polyline points="219.50,201.40 221.07,200.10 222.63,202.70 224.20,200.10 225.77,202.70 227.33,200.10 228.90,201.40" fill="none" stroke="#6f4868" stroke-width="0.9"/>
<path d="M228.9 201.5 H247.1" stroke="#2e8f5e" stroke-width="1"/>
<circle cx="240.4" cy="201.5" r="1.5" fill="#2e8f5e"/>
<path d="M240.5 201.5 V206.1" stroke="#2e8f5e" stroke-width="1"/>
<rect x="238.1" y="206.1" width="3.7" height="19.6" fill="#6485a5"/>
<path d="M247.1 201.5 H249.8 V198.5 H248 M249.5 194.5 H254.5 M252 194.5 V198 L253 199 M256.8 201.5 H254.3 V198.5 H256" stroke="#6f4868" stroke-width="1" fill="none"/>
<rect x="248.2" y="190.2" width="4.8" height="2.5" fill="#6485a5"/>
<path d="M256.8 198.5 H266.1" stroke="#2e8f5e" stroke-width="1"/>
<rect x="266" y="197" width="8" height="3.8" fill="#6485a5"/>
<rect x="147.2" y="228.2" width="6.7" height="3.7" fill="#6485a5"/>
<path d="M153.9 230.5 H169.2" stroke="#2e8f5e" stroke-width="1"/>
<rect x="169.2" y="226.1" width="4.6" height="2.6" fill="#6485a5"/>
<rect x="170.3" y="230.7" width="4.4" height="2.8" fill="#6485a5"/>
<polyline points="169.00,230.40 170.45,229.10 171.90,231.70 173.35,229.10 174.80,231.70 176.25,229.10 177.70,230.40" fill="none" stroke="#6f4868" stroke-width="0.9"/>
<path d="M177.7 230.5 H194.3" stroke="#2e8f5e" stroke-width="1"/>
<circle cx="186.4" cy="230.4" r="1.5" fill="#2e8f5e"/>
<path d="M186.5 230.4 V236" stroke="#2e8f5e" stroke-width="1"/>
<rect x="184.8" y="236" width="3.2" height="7" fill="#6485a5"/>
<path d="M194.3 230.5 H197 V227.5 H195.3 M196.8 223.5 H201.8 M199.3 223.5 V227 L200.3 228 M203.9 232.5 H201.5 V229.5 H203.3" stroke="#6f4868" stroke-width="1" fill="none"/>
<rect x="195" y="222.1" width="4.8" height="2.7" fill="#6485a5"/>
<path d="M203.9 232.5 H218.4" stroke="#2e8f5e" stroke-width="1"/>
<rect x="218.4" y="231.1" width="7.6" height="3.7" fill="#6485a5"/>
<path d="M270 225.5 H295" stroke="#2e8f5e" stroke-width="1"/>
<rect x="263.1" y="223.2" width="6.9" height="3.7" fill="#6485a5"/>
<rect x="281.2" y="220.2" width="4.8" height="2.6" fill="#6485a5"/>
<rect x="282.2" y="227.3" width="4.7" height="2.7" fill="#6485a5"/>
<path d="M280.5 225.5 H287.5" stroke="#6f4868" stroke-width="1"/>
<path d="M283.5 223.5 V227.8" stroke="#6f4868" stroke-width="1"/>
<rect x="147.1" y="228.1" width="6.8" height="3.8" fill="#6485a5"/>
<path d="M133.3 244.5 H139.8" stroke="#6f4868" stroke-width="1"/>
<path d="M133.3 246.5 H139.8" stroke="#6f4868" stroke-width="1"/>
<path d="M133.3 249.5 H139.8" stroke="#6f4868" stroke-width="1"/>
<path d="M133.3 251.5 H139.8" stroke="#6f4868" stroke-width="1"/>
<path d="M133.3 254.5 H139.8" stroke="#6f4868" stroke-width="1"/>
<path d="M133.3 256.5 H139.8" stroke="#6f4868" stroke-width="1"/>
<rect x="137.4" y="241.4" width="6.2" height="18.0" fill="none" stroke="#6f4868" stroke-width="0.9"/>
<rect x="139.1" y="259.7" width="4.9" height="2.3" fill="#6485a5"/>
<rect x="103" y="242.2" width="7" height="3.4" fill="#6485a5"/>
<path d="M110 244.5 H133.3" stroke="#2e8f5e" stroke-width="1"/>
<path d="M86.5 249.5 H133.3" stroke="#2e8f5e" stroke-width="1"/>
<path d="M86.5 247 L84.3 249.4 L86.5 251" stroke="#6f4868" stroke-width="0.9" fill="none"/>
<rect x="81" y="251.1" width="6.9" height="2.8" fill="#6485a5"/>
<rect x="92" y="250.1" width="6" height="3.6" fill="#6485a5"/>
<path d="M98 251.5 H133.3" stroke="#2e8f5e" stroke-width="1"/>
<rect x="105.1" y="252.2" width="4.8" height="3.6" fill="#6485a5"/>
<path d="M109.9 254.5 H133.3" stroke="#2e8f5e" stroke-width="1"/>
<circle cx="133.6" cy="244.4" r="1.4" fill="#2e8f5e"/>
<circle cx="133.6" cy="249.4" r="1.4" fill="#2e8f5e"/>
<circle cx="133.6" cy="251.3" r="1.4" fill="#2e8f5e"/>
<circle cx="133.6" cy="254.4" r="1.4" fill="#2e8f5e"/>
<rect x="216.2" y="239.1" width="8.6" height="7.5" fill="none" stroke="#6f4868" stroke-width="0.9"/>
<path d="M217.5 240.1 L219.5 242.85 L217.5 245.6 M219.5 240.1 L217.5 242.85 L219.5 245.6" stroke="#6f4868" stroke-width="0.7" fill="none"/>
<path d="M219 241.5 H230" stroke="#2e8f5e" stroke-width="1"/>
<path d="M219 244.5 H237" stroke="#2e8f5e" stroke-width="1"/>
<rect x="230" y="240.2" width="6.7" height="3.6" fill="#6485a5"/>
<rect x="237" y="242.2" width="8" height="3.5" fill="#6485a5"/>
<rect x="218.2" y="246.9" width="6.6" height="2.7" fill="#6485a5"/>
<rect x="216.2" y="251.4" width="8.6" height="8.0" fill="none" stroke="#6f4868" stroke-width="0.9"/>
<path d="M217.5 252.4 L219.5 255.39999999999998 L217.5 258.4 M219.5 252.4 L217.5 255.39999999999998 L219.5 258.4" stroke="#6f4868" stroke-width="0.7" fill="none"/>
<path d="M219 254.5 H230" stroke="#2e8f5e" stroke-width="1"/>
<path d="M219 256.5 H237" stroke="#2e8f5e" stroke-width="1"/>
<rect x="230" y="252.3" width="6.7" height="3.5" fill="#6485a5"/>
<rect x="237" y="255.2" width="8" height="3.6" fill="#6485a5"/>
<rect x="218.2" y="259.7" width="6.6" height="2.1" fill="#6485a5"/>
<rect x="216.2" y="265.2" width="8.6" height="7.3" fill="none" stroke="#6f4868" stroke-width="0.9"/>
<path d="M217.5 266.2 L219.5 268.85 L217.5 271.5 M219.5 266.2 L217.5 268.85 L219.5 271.5" stroke="#6f4868" stroke-width="0.7" fill="none"/>
<path d="M219 267.5 H230" stroke="#2e8f5e" stroke-width="1"/>
<path d="M219 270.5 H243.9" stroke="#2e8f5e" stroke-width="1"/>
<rect x="230" y="266.1" width="13" height="3.8" fill="#6485a5"/>
<rect x="243.9" y="268.2" width="12.9" height="3.5" fill="#6485a5"/>
<rect x="213" y="273.1" width="10.9" height="2.7" fill="#6485a5"/>
<rect x="218" y="231.1" width="8" height="3.7" fill="#6485a5"/>
<rect x="257.1" y="246.9" width="7.8" height="4.0" fill="#6485a5"/>
<path d="M264.9 249.5 H295" stroke="#2e8f5e" stroke-width="1"/>
<rect x="278.1" y="245.1" width="4.6" height="2.7" fill="#6485a5"/>
<rect x="279.2" y="249.3" width="8.7" height="3.6" fill="#6485a5"/>
<polyline points="279.20,249.30 280.62,248.00 282.03,250.60 283.45,248.00 284.87,250.60 286.28,248.00 287.70,249.30" fill="none" stroke="#6f4868" stroke-width="0.9"/>
<rect x="141.1" y="273.1" width="6.7" height="3.6" fill="#6485a5"/>
<path d="M147.8 275.5 H164.2" stroke="#2e8f5e" stroke-width="1"/>
<rect x="150.1" y="271.1" width="7.9" height="8.8" fill="#6485a5"/>
<path d="M158 272.5 H164.2" stroke="#2e8f5e" stroke-width="1"/>
<path d="M158 277.5 H164.2" stroke="#2e8f5e" stroke-width="1"/>
<rect x="164.2" y="270.5" width="16.5" height="10.0" fill="none" stroke="#6f4868" stroke-width="0.9"/>
<rect x="165" y="271.5" width="5" height="8" fill="#6485a5" opacity="0.7"/><rect x="174.8" y="271.5" width="5" height="8" fill="#6485a5" opacity="0.7"/>
<path d="M164.2 272.5 H171" stroke="#2e8f5e" stroke-width="1"/>
<path d="M173.8 272.5 H188.9" stroke="#2e8f5e" stroke-width="1"/>
<circle cx="172" cy="272.4" r="1" fill="none" stroke="#6f4868" stroke-width="0.6"/><circle cx="173.6" cy="272.4" r="1" fill="none" stroke="#6f4868" stroke-width="0.6"/>
<path d="M164.2 275.5 H171" stroke="#2e8f5e" stroke-width="1"/>
<path d="M173.8 275.5 H188.9" stroke="#2e8f5e" stroke-width="1"/>
<circle cx="172" cy="275.4" r="1" fill="none" stroke="#6f4868" stroke-width="0.6"/><circle cx="173.6" cy="275.4" r="1" fill="none" stroke="#6f4868" stroke-width="0.6"/>
<path d="M164.2 277.5 H171" stroke="#2e8f5e" stroke-width="1"/>
<path d="M173.8 277.5 H188.9" stroke="#2e8f5e" stroke-width="1"/>
<circle cx="172" cy="277.5" r="1" fill="none" stroke="#6f4868" stroke-width="0.6"/><circle cx="173.6" cy="277.5" r="1" fill="none" stroke="#6f4868" stroke-width="0.6"/>
<rect x="165.2" y="267.2" width="4.6" height="2.8" fill="#6485a5"/>
<rect x="165.2" y="281.2" width="14.7" height="2.6" fill="#6485a5"/>
<rect x="189.2" y="271.1" width="7.8" height="8.8" fill="#6485a5"/>
<rect x="197.8" y="273.1" width="8.0" height="3.6" fill="#6485a5"/>
<path d="M197 275.5 H197.8" stroke="#2e8f5e" stroke-width="1"/>
<rect x="213.1" y="273.1" width="6.9" height="2.8" fill="#6485a5"/>
</g><defs><clipPath id="cv"><rect x="318" y="122" width="1031" height="563"/></clipPath></defs>
<g clip-path="url(#cv)" font-family="Liberation Sans" fill="none">
<path d="M820.1 124.6 H866.5 L877.2 136.1 L866.5 147.6 H820.1 Z" fill="none" stroke="#787878" stroke-width="1.9"/>
<path d="M878.2 132.1 V140.1" stroke="#787878" stroke-width="0.9"/>
<text x="829.1" y="142.8" font-size="16" fill="#7a7a7a" textLength="35.8" lengthAdjust="spacingAndGlyphs" >VCC</text>
<path d="M877.2 136 H982.3" stroke="#4ca64c" stroke-width="2"/>
<path d="M982.3 136 H1001.5" stroke="#a04444" stroke-width="2"/>
<path d="M1001.5 136 L1004 129.6 L1008.7 143.2 L1013 129.6 L1018 143.2 L1022.7 129.6 L1027.4 143.2 L1032 129.6 L1036.7 143.2 L1039.6 136" stroke="#a04444" stroke-width="2" stroke-linejoin="round"/>
<path d="M1039.6 136 H1057.2" stroke="#a04444" stroke-width="2"/>
<path d="M1057.2 136 H1172.9" stroke="#4ca64c" stroke-width="2"/>
<text x="991.3" y="124.7" font-size="16" fill="#7a7a7a" textLength="22.9" lengthAdjust="spacingAndGlyphs" >R8</text>
<text x="992" y="160.7" font-size="16" fill="#7a7a7a" textLength="29.5" lengthAdjust="spacingAndGlyphs" >10K</text>
<path d="M1115 136 V184.6" stroke="#4ca64c" stroke-width="2"/>
<polygon points="1114.10,132.40 1116.50,132.40 1119.20,135.10 1119.20,137.50 1116.50,140.20 1114.10,140.20 1111.40,137.50 1111.40,135.10" fill="#4aa54a" stroke="#4ca64c" stroke-width="0.8"/>
<path d="M1103.9 238.8 V195.6 L1115 184.6 L1126.3 195.6 V238.8 Z" fill="none" stroke="#787878" stroke-width="1.9"/>
<path d="M1111 183.6 H1119" stroke="#787878" stroke-width="0.9"/>
<text x="0" y="0" font-size="16" fill="#7a7a7a" textLength="37" lengthAdjust="spacingAndGlyphs" transform="translate(1121 231.6) rotate(-90)">RST</text>
<path d="M1172.9 136 H1191.1" stroke="#a04444" stroke-width="2"/>
<path d="M1191.1 136 V155.4" stroke="#a04444" stroke-width="2"/>
<path d="M1171 155.4 H1192" stroke="#a04444" stroke-width="2"/>
<path d="M1188.2 135 H1194 L1191.1 139.5 Z" fill="#a04444"/>
<path d="M1191.1 136 L1224.6 126.6" stroke="#a04444" stroke-width="2"/>
<path d="M1210.1 122 V140.7 M1206.1 136.6 H1214.7" stroke="#a04444" stroke-width="1"/>
<path d="M1222.9 136 H1248.9" stroke="#a04444" stroke-width="2"/>
<path d="M1226 135 H1231.8 L1228.9 139.5 Z" fill="#a04444"/>
<path d="M1228.9 136 V155.4" stroke="#a04444" stroke-width="2"/>
<path d="M1228 155.4 H1247" stroke="#a04444" stroke-width="2"/>
<path d="M1247 155.4 H1349" stroke="#4ca64c" stroke-width="2"/>
<text x="1180" y="133.8" font-size="16" fill="#7a7a7a" textLength="6.7" lengthAdjust="spacingAndGlyphs" >1</text>
<text x="1179.8" y="152.6" font-size="16" fill="#7a7a7a" textLength="7.2" lengthAdjust="spacingAndGlyphs" >2</text>
<text x="1231.8" y="133.8" font-size="16" fill="#7a7a7a" textLength="7.2" lengthAdjust="spacingAndGlyphs" >3</text>
<text x="1231.2" y="152.6" font-size="16" fill="#7a7a7a" textLength="8.5" lengthAdjust="spacingAndGlyphs" >4</text>
<path d="M1352 203 H1343 V259.5 H1352" stroke="#a04444" stroke-width="3.8" stroke-linejoin="round"/>
<path d="M1352 298.5 H1343 V354 H1352" stroke="#a04444" stroke-width="3.8" stroke-linejoin="round"/>
<path d="M1352 402 H1343 V458 H1352" stroke="#a04444" stroke-width="3.8" stroke-linejoin="round"/>
<text x="1325.8" y="476.5" font-size="16" fill="#7a7a7a" textLength="24.7" lengthAdjust="spacingAndGlyphs" >FR</text>
<path d="M485.9 229.4 H534.3 L544.3 240.9 L534.3 252.4 H485.9 Z" fill="none" stroke="#787878" stroke-width="1.9"/>
<path d="M545.3 236.9 V244.9" stroke="#787878" stroke-width="0.9"/>
<text x="494.1" y="246.5" font-size="16" fill="#7a7a7a" textLength="37.6" lengthAdjust="spacingAndGlyphs" >GND</text>
<path d="M408.7 286.1 H439.7 L450.8 297.6 L439.7 309.1 H408.7 Z" fill="none" stroke="#787878" stroke-width="1.9"/>
<path d="M451.8 293.6 V301.6" stroke="#787878" stroke-width="0.9"/>
<text x="416.2" y="303.6" font-size="16" fill="#7a7a7a" textLength="21.8" lengthAdjust="spacingAndGlyphs" >TX</text>
<path d="M501.7 305.0 H534.5 L545.2 316.5 L534.5 328.0 H501.7 Z" fill="none" stroke="#787878" stroke-width="1.9"/>
<path d="M546.2 312.5 V320.5" stroke="#787878" stroke-width="0.9"/>
<text x="509.6" y="322.5" font-size="16" fill="#7a7a7a" textLength="21.9" lengthAdjust="spacingAndGlyphs" >RX</text>
<path d="M360.2 268.8 L346.9 279.1 L360.2 288" stroke="#a04444" stroke-width="2"/>
<path d="M346.9 279.1 H364.3" stroke="#a04444" stroke-width="2"/>
<path d="M342 279.1 H348 M346.5 275.4 V282.8" stroke="#a04444" stroke-width="1"/>
<text x="327.2" y="310.6" font-size="16" fill="#7a7a7a" textLength="35.6" lengthAdjust="spacingAndGlyphs" >VCC</text>
<path d="M545 240.7 H717" stroke="#4ca64c" stroke-width="2"/>
<path d="M364.3 279.09999999999997 H717" stroke="#4ca64c" stroke-width="2"/>
<path d="M451 298.29999999999995 H717" stroke="#4ca64c" stroke-width="2"/>
<path d="M545 317.5 H717" stroke="#4ca64c" stroke-width="2"/>
<path d="M716.5 240.7 H745" stroke="#a04444" stroke-width="2"/>
<path d="M752 238.29999999999998 H766 V243.1 H754.5 L752 241.2 Z" fill="#a04444"/>
<text x="728" y="237.7" font-size="16.5" fill="#7a7a7a" textLength="7" lengthAdjust="spacingAndGlyphs" >1</text>
<path d="M715.3 259.9 H745" stroke="#a04444" stroke-width="2"/>
<path d="M752 257.5 H766 V262.29999999999995 H754.5 L752 260.4 Z" fill="#a04444"/>
<text x="728" y="256.9" font-size="16.5" fill="#7a7a7a" textLength="7" lengthAdjust="spacingAndGlyphs" >2</text>
<path d="M716.5 279.09999999999997 H745" stroke="#a04444" stroke-width="2"/>
<path d="M752 276.7 H766 V281.49999999999994 H754.5 L752 279.59999999999997 Z" fill="#a04444"/>
<text x="728" y="276.09999999999997" font-size="16.5" fill="#7a7a7a" textLength="7" lengthAdjust="spacingAndGlyphs" >3</text>
<path d="M716.5 298.29999999999995 H745" stroke="#a04444" stroke-width="2"/>
<path d="M752 295.9 H766 V300.69999999999993 H754.5 L752 298.79999999999995 Z" fill="#a04444"/>
<text x="728" y="295.29999999999995" font-size="16.5" fill="#7a7a7a" textLength="7" lengthAdjust="spacingAndGlyphs" >4</text>
<path d="M716.5 317.5 H745" stroke="#a04444" stroke-width="2"/>
<path d="M752 315.1 H766 V319.9 H754.5 L752 318.0 Z" fill="#a04444"/>
<text x="728" y="314.5" font-size="16.5" fill="#7a7a7a" textLength="7" lengthAdjust="spacingAndGlyphs" >5</text>
<path d="M715.3 336.7 H745" stroke="#a04444" stroke-width="2"/>
<path d="M752 334.3 H766 V339.09999999999997 H754.5 L752 337.2 Z" fill="#a04444"/>
<text x="728" y="333.7" font-size="16.5" fill="#7a7a7a" textLength="7" lengthAdjust="spacingAndGlyphs" >6</text>
<polygon points="715.60,237.00 718.00,237.00 720.70,239.70 720.70,242.10 718.00,244.80 715.60,244.80 712.90,242.10 712.90,239.70" fill="#4aa54a" stroke="#4ca64c" stroke-width="0.8"/>
<polygon points="715.60,275.40 718.00,275.40 720.70,278.10 720.70,280.50 718.00,283.20 715.60,283.20 712.90,280.50 712.90,278.10" fill="#4aa54a" stroke="#4ca64c" stroke-width="0.8"/>
<polygon points="715.60,294.60 718.00,294.60 720.70,297.30 720.70,299.70 718.00,302.40 715.60,302.40 712.90,299.70 712.90,297.30" fill="#4aa54a" stroke="#4ca64c" stroke-width="0.8"/>
<polygon points="715.60,313.80 718.00,313.80 720.70,316.50 720.70,318.90 718.00,321.60 715.60,321.60 712.90,318.90 712.90,316.50" fill="#4aa54a" stroke="#4ca64c" stroke-width="0.8"/>
<rect x="745.2" y="222" width="46.6" height="133" fill="none" stroke="#a04444" stroke-width="3.6" stroke-linejoin="round"/>
<text x="761.3" y="372.6" font-size="16" fill="#7a7a7a" textLength="29.7" lengthAdjust="spacingAndGlyphs" >SL1</text>
<rect x="954.2" y="440.4" width="114" height="74.9" fill="none" stroke="#a04444" stroke-width="3.8" stroke-linejoin="round"/>
<path d="M839.6 447.5 H895.8 L906.3 459 L895.8 470.5 H839.6 Z" fill="none" stroke="#787878" stroke-width="1.9"/>
<path d="M907.3 455 V463" stroke="#787878" stroke-width="0.9"/>
<text x="849.7" y="465.3" font-size="16" fill="#7a7a7a" textLength="43.7" lengthAdjust="spacingAndGlyphs" >MISO</text>
<path d="M773.6 466.5 H819.7 L830.2 478 L819.7 489.5 H773.6 Z" fill="none" stroke="#787878" stroke-width="1.9"/>
<path d="M831.2 474 V482" stroke="#787878" stroke-width="0.9"/>
<text x="781.5" y="484.3" font-size="16" fill="#7a7a7a" textLength="35.4" lengthAdjust="spacingAndGlyphs" >SCK</text>
<path d="M850.6 485.5 H895.8 L906 497 L895.8 508.5 H850.6 Z" fill="none" stroke="#787878" stroke-width="1.9"/>
<path d="M907 493 V501" stroke="#787878" stroke-width="0.9"/>
<text x="857" y="503.3" font-size="16" fill="#7a7a7a" textLength="35" lengthAdjust="spacingAndGlyphs" >RST</text>
<path d="M1191.2 447.5 H1144.5 L1134.3 459 L1144.5 470.5 H1191.2 Z" fill="none" stroke="#787878" stroke-width="1.9"/>
<path d="M1134.3 455 V463" stroke="#787878" stroke-width="0.9"/>
<text x="1145.3" y="465.4" font-size="16" fill="#7a7a7a" textLength="35.7" lengthAdjust="spacingAndGlyphs" >VCC</text>
<path d="M1257.1 466.5 H1201.6 L1191.2 478 L1201.6 489.5 H1257.1 Z" fill="none" stroke="#787878" stroke-width="1.9"/>
<path d="M1191.2 474 V482" stroke="#787878" stroke-width="0.9"/>
<text x="1202.4" y="484.3" font-size="16" fill="#7a7a7a" textLength="44.0" lengthAdjust="spacingAndGlyphs" >MOSI</text>
<path d="M1193.2 485.5 H1144.5 L1134.3 497 L1144.5 508.5 H1193.2 Z" fill="none" stroke="#787878" stroke-width="1.9"/>
<path d="M1134.3 493 V501" stroke="#787878" stroke-width="0.9"/>
<text x="1145.8" y="503.3" font-size="16" fill="#7a7a7a" textLength="38.2" lengthAdjust="spacingAndGlyphs" >GND</text>
<path d="M906.3 459 H982" stroke="#4ca64c" stroke-width="2"/>
<path d="M830.2 478 H982" stroke="#4ca64c" stroke-width="2"/>
<path d="M906 497 H982" stroke="#4ca64c" stroke-width="2"/>
<path d="M1038 459 H1134.3" stroke="#4ca64c" stroke-width="2"/>
<path d="M1038 478 H1191.2" stroke="#4ca64c" stroke-width="2"/>
<path d="M1038 497 H1134.3" stroke="#4ca64c" stroke-width="2"/>
<path d="M981.5 459 H987.6" stroke="#a04444" stroke-width="2"/>
<path d="M1033.4 459 H1038.5" stroke="#a04444" stroke-width="2"/>
<circle cx="994.1" cy="459" r="6.4" stroke="#a04444" stroke-width="2.2"/>
<circle cx="1026.9" cy="459" r="6.4" stroke="#a04444" stroke-width="2.2"/>
<path d="M981.5 478 H987.6" stroke="#a04444" stroke-width="2"/>
<path d="M1033.4 478 H1038.5" stroke="#a04444" stroke-width="2"/>
<circle cx="994.1" cy="478" r="6.4" stroke="#a04444" stroke-width="2.2"/>
<circle cx="1026.9" cy="478" r="6.4" stroke="#a04444" stroke-width="2.2"/>
<path d="M981.5 497 H987.6" stroke="#a04444" stroke-width="2"/>
<path d="M1033.4 497 H1038.5" stroke="#a04444" stroke-width="2"/>
<circle cx="994.1" cy="497" r="6.4" stroke="#a04444" stroke-width="2.2"/>
<circle cx="1026.9" cy="497" r="6.4" stroke="#a04444" stroke-width="2.2"/>
<path d="M997 478 H1005.8" stroke="#a04444" stroke-width="1"/>
<text x="963.7" y="453.7" font-size="12" fill="#7a7a7a" textLength="31.6" lengthAdjust="spacingAndGlyphs" >MISO</text>
<text x="963.7" y="472.7" font-size="12" fill="#7a7a7a" textLength="25.2" lengthAdjust="spacingAndGlyphs" >SCK</text>
<text x="963.7" y="491.4" font-size="12" fill="#7a7a7a" textLength="22.8" lengthAdjust="spacingAndGlyphs" >RST</text>
<text x="1031.5" y="453.7" font-size="12" fill="#7a7a7a" textLength="25.5" lengthAdjust="spacingAndGlyphs" >VCC</text>
<text x="1026" y="472.7" font-size="12" fill="#7a7a7a" textLength="31.6" lengthAdjust="spacingAndGlyphs" >MOSI</text>
<text x="1031.5" y="491.4" font-size="12" fill="#7a7a7a" textLength="25.5" lengthAdjust="spacingAndGlyphs" >GND</text>
<text x="953.3" y="434.7" font-size="16" fill="#7a7a7a" textLength="32.3" lengthAdjust="spacingAndGlyphs" >U$3</text>
<text x="953.3" y="534.8" font-size="16" fill="#7a7a7a" textLength="101.0" lengthAdjust="spacingAndGlyphs" >AVRISPSMD</text>
</g></svg></body></html>
